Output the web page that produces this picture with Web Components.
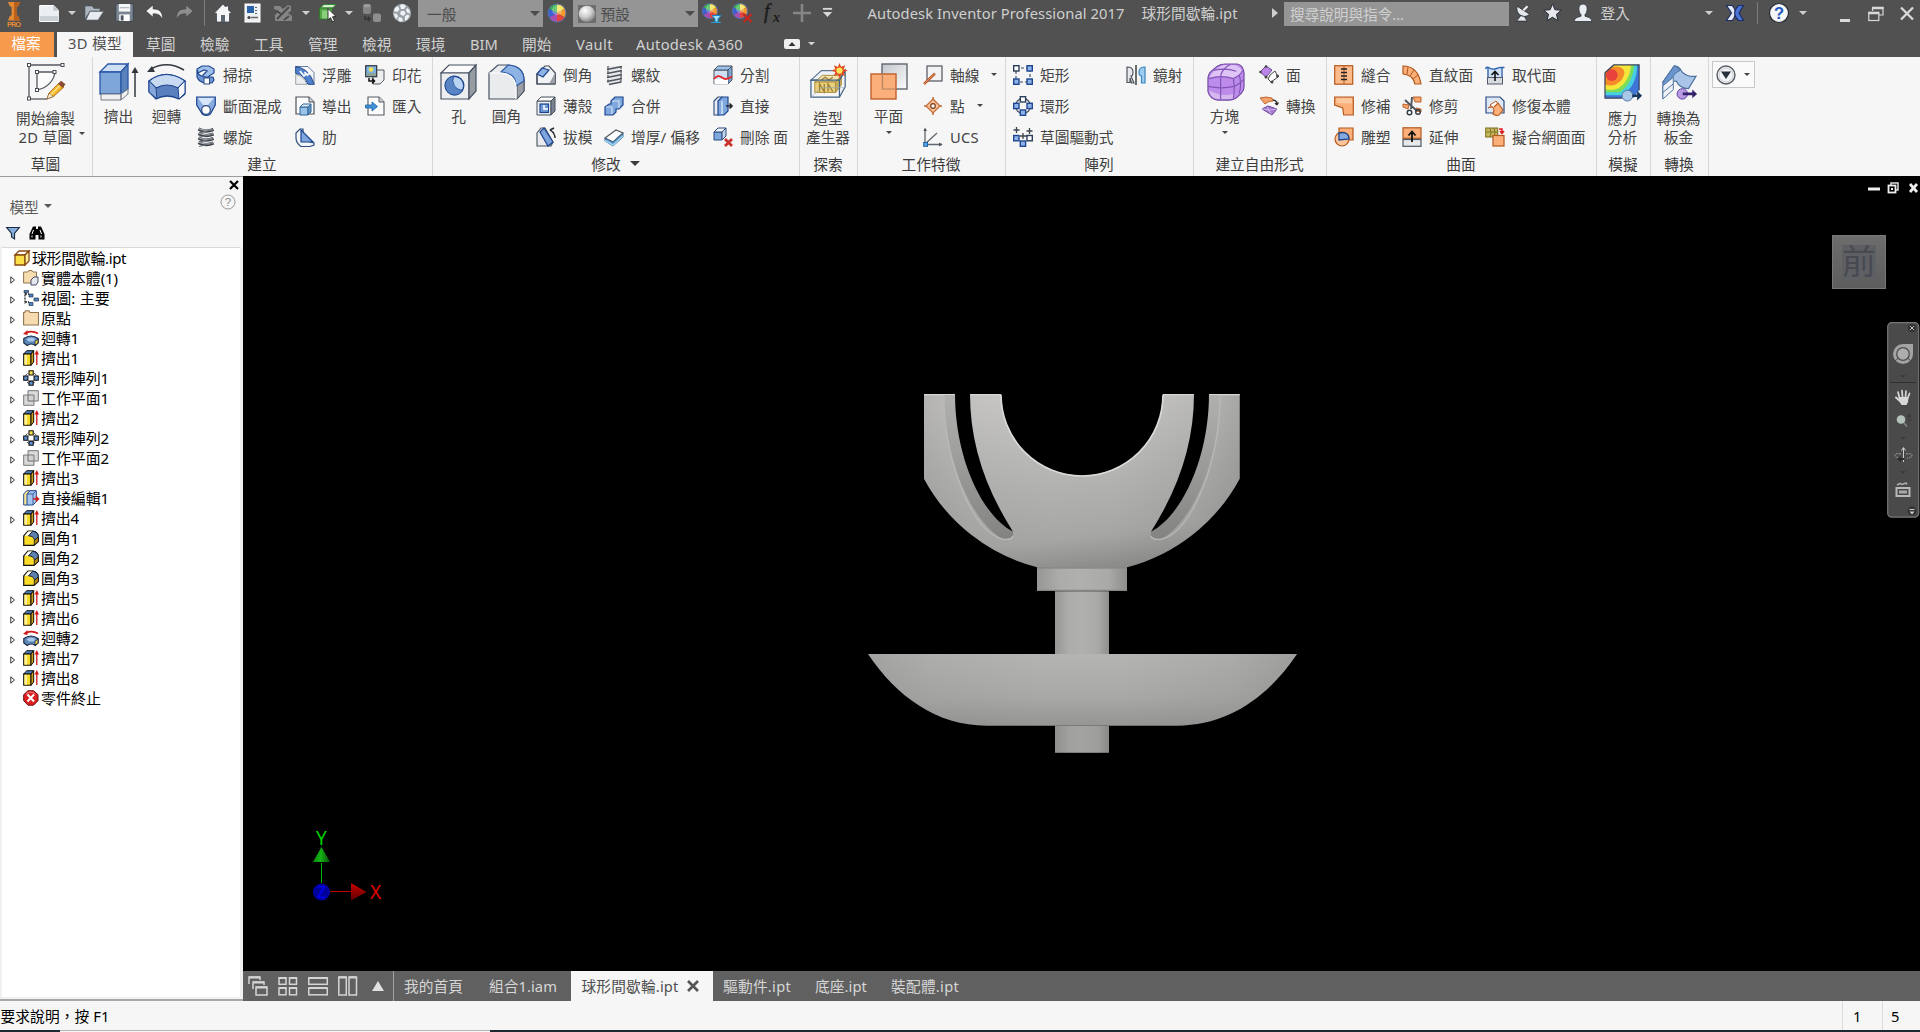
<!DOCTYPE html>
<html lang="zh-Hant">
<head>
<meta charset="utf-8">
<title>Autodesk Inventor Professional 2017</title>
<style>
html,body{margin:0;padding:0}
body{width:1920px;height:1032px;overflow:hidden;background:#f6f6f6;font-family:"Noto Sans","Noto Sans CJK TC",sans-serif;font-size:14.7px;line-height:20px;color:#444}
</style>
</head>
<body>
<inv-app></inv-app>
<script>
const cubeS = (x, y, s, d, f, t, r, st) => `<path d="M${x} ${y + d}h${s}v${s}h${-s}z" fill="${f}" stroke="${st}"/><path d="M${x} ${y + d}l${d} ${-d}h${s}l${-d} ${d}z" fill="${t}" stroke="${st}"/><path d="M${x + s} ${y + d}l${d} ${-d}v${s}l${-d} ${d}z" fill="${r}" stroke="${st}"/>`;
const wheel = (cx, cy, r) => {
  const c = ['#f4e04a', '#f59a2e', '#e2453c', '#a84fb4', '#3c62d0', '#35b34a'];
  let s = '';
  for (let i = 0; i < 6; i++) {
    const a = (i * 60 - 90) * Math.PI / 180, b = (i * 60 - 30) * Math.PI / 180;
    s += `<path d="M${cx} ${cy}L${(cx + r * Math.cos(a)).toFixed(2)} ${(cy + r * Math.sin(a)).toFixed(2)}A${r} ${r} 0 0 1 ${(cx + r * Math.cos(b)).toFixed(2)} ${(cy + r * Math.sin(b)).toFixed(2)}z" fill="${c[i]}"/>`;
  }
  return s + `<circle cx="${cx}" cy="${cy}" r="${r}" fill="none" stroke="#5b6ea8" stroke-width="1"/><circle cx="${cx}" cy="${cy - r * .3}" r="${r * .55}" fill="#fff" opacity=".28"/>`;
};
const node = (x, y, f = '#8fb4ea', s = '#1f4690') => `<rect x="${x}" y="${y}" width="5.300" height="5.300" fill="${f}" stroke="${s}" stroke-width="1.400"/>`;
const ICONS = {
  /* quick access */
  logo: [16, 28, `<path d="M2 2h12l-1.600 4-2 1v8l2 1.500 1.600 4H2l1.600-4 2-1.500V7l-2-1z" fill="#e58a32"/><path d="M8 2h6l-1.600 4-2 1v8l2 1.500 1.600 4H8z" fill="#b9611c"/><text x="8" y="27" text-anchor="middle" textLength="14" font-size="7.500" font-weight="700" font-family="Liberation Sans" fill="#e58a32">PRO</text>`],
  newdoc: [20, 20, `<path d="M.7 2.500h14l4.600 4.600v11.400H.7z" fill="#eceff2" stroke="#fff"/><path d="M1 13h18v5H1z" fill="#c9d0d6"/><path d="M14.500 2.500v5h5z" fill="#b9c0c8"/>`],
  open: [20, 20, `<path d="M1 16V3h7l2 2.500h6V8H6z" fill="#aeb6bf" stroke="#4b5560" stroke-width=".6"/><path d="M2 17L6 8.500h13.500L14 17z" fill="#e8ecf0" stroke="#5a6570" stroke-width=".6"/>`],
  save: [20, 20, `<rect x=".8" y=".8" width="18.400" height="18.400" rx="1" fill="#7b8591" stroke="#39424d"/><rect x="4" y="1" width="12" height="8" fill="#f6f7f8"/><path d="M5 5h10" stroke="#9aa3ad"/><rect x="4.500" y="12" width="11" height="7" fill="#fff"/><rect x="6" y="13" width="3" height="5.500" fill="#4c5561"/>`],
  undo: [20, 20, `<path d="M1 8.500L8.500 2v4.200C15 6.200 19 9 18.500 18 16.500 12 13 11.300 8.500 11.300V15z" fill="#f4f4f4" stroke="#2f2f2f" stroke-width=".6"/>`],
  redo: [20, 20, `<path d="M19 8.500L11.500 2v4.200C5 6.200 1 9 1.500 18 3.500 12 7 11.300 11.500 11.300V15z" fill="#8e8e8e" stroke="#454545" stroke-width=".6"/>`],
  home: [20, 20, `<path d="M10 1L1 10.500h2.500V19h13v-8.500H19L15.500 7V3h-2.800v1z" fill="#f2f4f6" stroke="#3c4550" stroke-width=".8"/><rect x="8" y="12" width="4" height="7" fill="#5b6570"/>`],
  dlg: [20, 20, `<rect x="2" y="1" width="15" height="18" fill="#eef1f4" stroke="#fff"/><rect x="4" y="3" width="7" height="7" fill="#2a63a8"/><path d="M13 4v1M13 7v1M13 10v1" stroke="#333" stroke-width="1.500"/><circle cx="6" cy="14.500" r="1.600" fill="#444"/><path d="M8 14.500h7" stroke="#666" stroke-width="1.500"/>`],
  mat: [20, 20, `<path d="M1 3h6l3 3 5-4 3 1v5l-3 2 4 3v5H2v-6l4-4-5-2z" fill="#858585"/><path d="M4 16L16 4M4 8l5 4M11 17l5-4" stroke="#494949" stroke-width="1.800"/>`],
  sel: [20, 20, `<path d="M2 5l4-3.500h12L14.500 5z" fill="#d8f1cf" stroke="#348a34"/><rect x="1.500" y="5" width="12.500" height="11" fill="#53a646" stroke="#2f7a2b"/><path d="M4 7.500h9v8H4z" fill="#8bcf7c"/><path d="M10 5.500l8 8-3.500.3 2 4-2 1-2-4.200-2.500 2.200z" fill="#fff" stroke="#222" stroke-width=".9"/>`],
  cubes: [20, 20, `<rect x="1" y="1" width="8" height="10" rx="2.500" fill="#848484"/><ellipse cx="5" cy="2.800" rx="3.600" ry="1.700" fill="#9b9b9b"/><rect x="11" y="10.500" width="8" height="8.500" rx="2" fill="#8e8e8e"/><path d="M3 13v3h5m-2-2l2 2-2 2" fill="none" stroke="#333" stroke-width="1.300"/>`],
  ball: [20, 20, `<circle cx="10" cy="10" r="9.200" fill="#9ba3aa"/><g fill="#f0f2f4"><path d="M8 2l3-1 3 2-2 3H9zM3 5l3-2 1.500 3.500L5 9 2 8zM9 8h3.500l1 3-2.500 2-3-2zM15 5l2.500 2 .5 3.500-3-1-1-2.500zM1.500 10.500L5 11l1 3-2 2zM7 14l3 1 1 3-3 .7-2-2zM13 13l3-1.500 1.500 1.500-2.500 4-2 .5z"/></g>`],
  wheel: [20, 20, wheel(10, 10, 9)],
  sphere: [18, 18, `<defs><radialGradient id="g" cx=".38" cy=".3" r=".8"><stop offset="0" stop-color="#fff"/><stop offset=".5" stop-color="#ccc"/><stop offset="1" stop-color="#6a6a6a"/></radialGradient></defs><rect width="18" height="18" fill="#6d6d6d"/><circle cx="9" cy="9" r="8.300" fill="url(#g)"/>`],
  wheelf: [20, 20, wheel(8, 8, 7.500) + `<path d="M10 12.500h9l-3 3.500v3h-3v-3z" fill="#9fdcf6" stroke="#1489c8"/><path d="M9 19.500h10" stroke="#2e9ad8"/>`],
  wheelx: [20, 20, wheel(8, 8, 7.500) + `<path d="M11.500 11l8 8m0-8l-8 8" stroke="#c22820" stroke-width="2.400"/>`],
  fx: [20, 20, `<text x="1" y="15" font-family="Liberation Serif" font-style="italic" font-size="20" fill="#1c1c1c" stroke="#1c1c1c" stroke-width=".4">f</text><text x="10" y="19" font-family="Liberation Serif" font-style="italic" font-weight="700" font-size="14" fill="#1c1c1c">x</text>`],
  plus: [20, 20, `<path d="M10 1v18M1 10h18" stroke="#868686" stroke-width="2.600"/>`],
  more: [12, 12, `<path d="M1 2h10" stroke="#d8d8d8" stroke-width="2"/><path d="M1 5.500h10L6 11z" fill="#d8d8d8"/>`],
  dish: [20, 20, `<path d="M3.500 2.500L17.500 11.500Q12 16 6.500 12 2 8.500 3.500 2.500z" fill="#e6e9ec" stroke="#222b35" stroke-width=".9"/><path d="M10.500 7L15 2.500" stroke="#f2f2f2" stroke-width="2.200"/><path d="M7.500 13L3 19h11.500L11.500 14z" fill="#e6e9ec" stroke="#222b35" stroke-width=".8"/>`],
  star: [20, 20, `<path d="M10 .8l2.500 6.300 6.700.5-5.100 4.300 1.700 6.600L10 15l-5.800 3.500 1.700-6.600L.8 7.600l6.700-.5z" fill="#e8e9ee" stroke="#1f2836" stroke-width="1"/>`],
  user: [20, 20, `<path d="M10 1c3 0 4.400 2.300 4.100 5.400-.2 2.600-1.100 4.300-2.100 5.200v1.600c3 .8 6.500 1.600 7 5.300H1c.5-3.700 4-4.500 7-5.300v-1.600C7 10.700 6.100 9 5.900 6.400 5.600 3.300 7 1 10 1z" fill="#e9edf1" stroke="#28323d" stroke-width=".8"/>`],
  exch: [20, 20, `<path d="M1.500 2.500h5.500q2.500 1.500 3.500 7-1 6.500-3.500 8H1.500L6.500 10z" fill="#e4e8f5" stroke="#1b2d66" stroke-width="1.200"/><path d="M18.500 2.500h-5Q10.500 5 9.500 10q1 5 4 7.500h5L14 10z" fill="#4a74d6" stroke="#1b2d66" stroke-width="1.200"/>`],
  help: [22, 22, `<circle cx="11" cy="11" r="9.500" fill="#f5f6f8" stroke="#242b35" stroke-width="1.200"/><text x="11" y="17" text-anchor="middle" font-size="16.500" font-weight="700" font-family="Liberation Sans" fill="#2458c0">?</text>`],
  min: [12, 20, `<path d="M0 17.500h10" stroke="#d9d9d9" stroke-width="3"/>`],
  rest: [16, 20, `<path d="M4.500 8V4.500h10.500V12H11" fill="none" stroke="#d9d9d9" stroke-width="1.200"/><path d="M4 5h11.500" stroke="#d9d9d9" stroke-width="2.500"/><rect x=".8" y="9.500" width="10" height="8" fill="none" stroke="#d9d9d9" stroke-width="1.200"/><path d="M.3 10h11" stroke="#d9d9d9" stroke-width="2.500"/>`],
  cls: [14, 20, `<path d="M1 4.500l12 12m0-12l-12 12" stroke="#d9d9d9" stroke-width="2.300"/>`],
  ribmin: [16, 10, `<rect width="16" height="10" rx="2" fill="#eee"/><path d="M4.500 7h7L8 3z" fill="#333"/>`],
  /* large ribbon buttons */
  sketch: [38, 38, `<path d="M2 36V2h34" fill="none" stroke="#54595f" stroke-width="1.300"/><path d="M2 36h18" stroke="#54595f" stroke-width="1.300"/><path d="M10 27V9h18C27 18 20 25 10 27z" fill="#fbfbfb" stroke="#54595f" stroke-width="1.300"/><g fill="#fff" stroke="#4a4f55"><rect x=".5" y=".5" width="3" height="3"/><rect x="34" y=".5" width="3" height="3"/><rect x=".5" y="34" width="3" height="3"/><rect x="8.500" y="7.500" width="3" height="3"/><rect x="26" y="7.500" width="3" height="3"/><rect x="8.500" y="25.500" width="3" height="3"/></g><path d="M20 36l2-6 10-10 5 4-10.500 9.500z" fill="#f3b428" stroke="#9a6414" stroke-width=".8"/><path d="M20 36l2-6 4.500 3.500z" fill="#f8e7c9" stroke="#6b4a1a" stroke-width=".6"/><path d="M31 21l3-3.200 4.500 3.400-3 3.500z" fill="#8a4a33"/><path d="M24 31.500l9-9" stroke="#fde48b" stroke-width="1.500"/>`],
  extrude: [40, 38, `<path d="M1 9l8-8h20l-7 8z" fill="#cfe0f4" stroke="#2a57a8" stroke-width="1.300"/><path d="M1 9h21v22H1z" fill="#7fa6d8" stroke="#2a57a8" stroke-width="1.300"/><path d="M22 9l7-8v25l-7 5z" fill="#5a83bb" stroke="#2a57a8" stroke-width="1.300"/><path d="M2 31h20v6H2zM22 31l7-5v5l-7 6z" fill="#eef0f2" stroke="#777c83"/><path d="M36 34V8" stroke="#33383e" stroke-width="1.500"/><path d="M36 4l3.500 6h-7z" fill="#33383e"/>`],
  revolve: [40, 38, `<path d="M2 18q17-13 36 0v13l-6 5q-12-6-23 0l-7-7z" fill="#5a80be" stroke="#1f4690" stroke-width="1.300"/><path d="M2 18q17-13 36 0l-7 7q-11-6-22 0z" fill="#c7daf2" stroke="#1f4690" stroke-width="1.200"/><path d="M31 25l7-7v12l-6 6z" fill="#f6f8fb" stroke="#1f4690"/><path d="M9 25l1 11-8-7V18z" fill="#86a7da" stroke="#1f4690"/><path d="M37 7Q20-3 4 6" fill="none" stroke="#33383e" stroke-width="1.600"/><path d="M0 9L5 3l3 6z" fill="#33383e"/>`],
  hole: [38, 38, `<path d="M1 10l8-8h27l-7 8z" fill="#fbfbfb" stroke="#465263" stroke-width="1.200"/><path d="M1 10h28v26H1z" fill="#eceef0" stroke="#465263" stroke-width="1.200"/><path d="M29 10l7-8v26l-7 8z" fill="#979ba2" stroke="#465263" stroke-width="1.200"/><circle cx="14.500" cy="22.500" r="9.300" fill="#b9d3f2" stroke="#1f4690" stroke-width="1.400"/><path d="M14 13a9.500 9.500 0 0 0 9 14A9.500 9.500 0 1 1 14 13z" fill="#5884c4" stroke="#1f4690" stroke-width=".8"/>`],
  fillet: [38, 38, `<path d="M1 10l9-8h10q16 1 16 15v11l-7 8H1z" fill="#e9ebed" stroke="#465263" stroke-width="1.200"/><path d="M29 23l7-7v12l-7 8z" fill="#9a9ea4" stroke="#465263"/><path d="M13 9l7-7q16 1 16 16l-8 5Q28 10 13 9z" fill="#8db3e5" stroke="#2a57a8" stroke-width="1.200"/><path d="M1 10h12q14 1 15 14v12" fill="none" stroke="#fff" stroke-width="1.200"/>`],
  shapegen: [40, 38, `<path d="M1 18L12 8h25L31 18z" fill="#eef3f9" stroke="#5f7690" stroke-width="1.200"/><path d="M5 20l8-7h20l-6 7z" fill="#f2e2ac" stroke="#a88a3c"/><path d="M5 20h22v11H5z" fill="#e7cf7c" stroke="#a88a3c"/><path d="M27 20l6-7v10l-6 8z" fill="#cbb05a" stroke="#a88a3c"/><path d="M10 30v-8l5 8v-8m4 8v-8l5 8M12 18l4-3 4 3 4-3" fill="none" stroke="#9c7b2c" stroke-width="1.300"/><path d="M1 18h30v18H1zM31 18l6-10v17l-6 11" fill="none" stroke="#3f6186" stroke-width="1.300"/><path d="M1 36l11-10h25" fill="none" stroke="#93a9c2" stroke-width=".7"/><path d="M31 0l1.700 4 4.300-1.500L35.400 6.500 40 8l-4.600 1.600 1.600 4-4.300-1.500L31 16l-1.600-4-4.200 1.600 1.500-4L22 8l4.700-1.500-1.500-4 4.200 1.600z" fill="#e34b1f"/><circle cx="31" cy="8" r="3.300" fill="#ffe45c"/>`],
  plane: [38, 38, `<defs><linearGradient id="g" x2="1" y2="1"><stop offset="0" stop-color="#c2c6cb"/><stop offset="1" stop-color="#fbfbfb"/></linearGradient></defs><rect x="12" y="1" width="25" height="25" fill="url(#g)" stroke="#5e6770" stroke-width="1.400"/><rect x="1" y="11" width="25" height="25" fill="#fbaa72" stroke="#c0602a" stroke-width="1.400" fill-opacity=".93"/><path d="M12.500 11v15H26" fill="none" stroke="#b98660" stroke-width="1.200"/>`],
  freeform: [40, 40, `<path d="M2 17Q2 11 6 8l6-5q3-2 8-2h12q6 1 7 9v14q0 5-5 9-4 5-10 5H12q-8-1-10-9z" fill="#bd8bea" stroke="#744aa5" stroke-width="1.200"/><path d="M3 16Q16 11 28 16q7-3 9-8-3-6-10-6h-9Q7 6 3 16z" fill="#dec3f6"/><path d="M3 28q14 8 27 3l-3 6H11q-6-1-8-9z" fill="#d9c2f0" opacity=".8"/><path d="M2 24q14 3 27 0 6-3 9.500-7M15 13v24M3 16q13-4 25 0 7-3 9.500-8M8 7.500q12-3 23 1M15 13q2-8 10-11.500M28 16q2 11 0 20M34 12q3 10 0 19" fill="none" stroke="#8454b8" stroke-width="1.200"/>`],
  stress: [40, 40, `<path d="M1 10l9-8h26v26l-6 8H1z" fill="#3e76d8"/><path d="M1 10l9-8h24q0 22-16 31H1z" fill="#45cfe0"/><path d="M1 10l9-8h21q-2 20-15 28H1z" fill="#7bdc5a"/><path d="M1 10l9-8h18q-2 17-13 24-6 3-14 1z" fill="#f5e63a"/><path d="M1 10l7-6q12-2 13 6-1 8-9 12-6 2-11 0z" fill="#f58b2a"/><circle cx="8" cy="12.500" r="6" fill="#e8403a"/><path d="M1 10l9-8h26v26M1 10v26h18" fill="none" stroke="#3a3f58" stroke-width="1.200"/><circle cx="24" cy="33.500" r="5.500" fill="#a9c8e8" stroke="#54799e"/><path d="M29 32.200h5v-3.700l5 5-5 5v-3.700h-5z" fill="#17375c"/>`],
  sheet: [40, 40, `<path d="M3 20L15 3q5 0 8 6 5 6 15 5L30 27q-9 0-13-8z" fill="#a9c4e6" stroke="#4a6f9c" stroke-width="1.200"/><path d="M3 20L15 3q4 0 6 5-6 2-10 11L7 25l-4 12z" fill="#6a94cc" stroke="#4a6f9c"/><path d="M3 24l11-9v13L3 38z" fill="#eef2f6" stroke="#4a6f9c"/><path d="M3 31l11-9" stroke="#4a6f9c"/><circle cx="23.500" cy="32.500" r="5.500" fill="#b79be2" stroke="#5d3ba0"/><path d="M24 31h10v-3l5 4.500-5 4.500v-3H24z" fill="#33216b"/>`],
  /* small ribbon buttons */
  sweep: [20, 20, `<path d="M2 8L1 4l5-3h7l5 3v4l-5 3v3H7v-4l4-4-3-1z" fill="#9dbfe9" stroke="#1f4690" stroke-width="1.200"/><path d="M1 7q3 5 10 5h6l1 3-2 3H9Q3 17 1 12z" fill="#6f98d4" stroke="#1f4690" stroke-width="1.200"/><rect x="8" y="13" width="5.500" height="6" fill="#fff" stroke="#2b4a80"/>`],
  loft: [20, 20, `<path d="M.7 1h18.600v8l-5 9q-4 3-8 0L.7 9z" fill="#87abdd" stroke="#1f4690" stroke-width="1.200"/><path d="M2 2h16L12 9H7z" fill="#d6e5f7"/><circle cx="10" cy="14" r="4.300" fill="#fff" stroke="#2b4a80" stroke-width="1.200"/>`],
  coil: [20, 20, [1, 5.5, 10, 14.5].map(y => `<path d="M2.500 ${y + 1}q7 4 15 .5" fill="none" stroke="#3e4349" stroke-width="3.200"/><path d="M3 ${y + .8}q7 3 14 .5" fill="none" stroke="#b7bcc2" stroke-width="1.100"/><path d="M17 ${y + 1.5}l-14 3.500" stroke="#6a7077" stroke-width="1"/>`).join('')],
  emboss: [20, 20, `<path d="M.7 1.500Q14 2 19.300 19.300H13Q9 9 .7 8.500z" fill="#4f82cc" stroke="#1f4690"/><path d="M.7 9.500v9.800H12Q8.500 11 .7 9.500z" fill="#eceef0" stroke="#8a9097" stroke-width=".8"/><path d="M.7 1.500H13l6 6v11Q14 3 .7 1.500z" fill="#f3f5f7" stroke="#2b4a80" stroke-width=".7"/><path d="M5 6l4 5 2-2-1.500-2 3 3 2.500-2-4-5" fill="none" stroke="#fff" stroke-width="1.700"/>`],
  derive: [20, 20, `<path d="M1 1h13l5 5v12H1z" fill="#fbfbfb" stroke="#4b535c" stroke-width="1.200"/><path d="M14 1v5h5" fill="#d0d4d8" stroke="#4b535c"/>` + cubeS(5, 8, 8, 3, '#9cc4ea', '#dcecfa', '#6495c9', '#2d6596')],
  rib: [20, 20, `<path d="M1 6l4-4h3v9q2 3 7 4l4 1v2l-4 1.500H6Q1 16 1 11z" fill="#f2f4f7" stroke="#33507e" stroke-width="1.200"/><path d="M6 3v12h12z" fill="#7fa7dd" stroke="#1f4690" stroke-width="1.200"/>`],
  decal: [20, 20, `<path d="M8 8l4-3h7v10l-4 4H8z" fill="#eceef0" stroke="#555b62"/><rect x=".7" y=".7" width="11" height="11" fill="#7bb2e2" stroke="#30363d" stroke-width="1.200"/><circle cx="6" cy="4.500" r="2.300" fill="#f7e24a"/><path d="M1.500 8h9.500v3H1.500z" fill="#8da39a"/><path d="M4 13v3h5m-2-2.500L9.500 16 7 18.500" fill="none" stroke="#111" stroke-width="1.500"/>`],
  import: [20, 20, `<path d="M3 1h11l5 5v13H3z" fill="#fbfbfb" stroke="#555c64" stroke-width="1.100"/><path d="M14 1v5h5" fill="#d0d4d8" stroke="#555c64"/><path d="M.5 9H7V6l5.500 4.500L7 15v-3H.5z" fill="#3f93dc" stroke="#1a5fa0" stroke-width=".8"/>`],
  chamfer: [20, 20, `<path d="M1 9l8-8h4l6.300 7v11H6L1 19z" fill="#f1f2f4" stroke="#46505c" stroke-width="1.200"/><path d="M1 9l5-6 7 2-6 7z" fill="#8db3e5" stroke="#1f4690" stroke-width="1.200"/><path d="M13 19h6V8z" fill="#9a9ea4"/><path d="M1 9v10h18" fill="none" stroke="#46505c" stroke-width="1.200"/>`],
  shell: [20, 20, cubeS(1, 1, 14, 4, '#f1f2f4', '#fff', '#7a8490', '#46505c') + `<rect x="4" y="8" width="8.500" height="8.500" fill="#6f9bd8" stroke="#1f4690" stroke-width="1.200"/><path d="M8 9v4h4" fill="none" stroke="#fff" stroke-width="1.500"/>`],
  draft: [20, 20, `<path d="M1 6l4-5h4l8 14-2 4H1z" fill="#e9ebee" stroke="#46505c" stroke-width="1.100"/><path d="M4 5l4-4 9 14-5 4z" fill="#7fa6dc" stroke="#1f4690" stroke-width="1.200"/><path d="M14 3l4-2m-4 2l4 3m-4-3q5 3 5 8" fill="none" stroke="#24282e" stroke-width="1.400"/>`],
  thread: [20, 20, `<path d="M4 1h13v18H4z" fill="#e7e9ec"/><path d="M4 1v18M17 1v18" stroke="#555" stroke-width="1.200" stroke-dasharray="3 1.500"/><path d="M3 4.500l15-3M3 8.500l15-3M3 12.500l15-3M3 16.500l15-3M5 19.500l12-2.500" stroke="#4e545b" stroke-width="1.500"/>`],
  combine: [20, 20, `<path d="M7 5l4-4h8v8l-4 4h-3v3l-3 3H1v-8l4-3h2z" fill="#7fa9de" stroke="#1f4690" stroke-width="1.200"/><path d="M8 5h7v7M2 11h6v7" fill="none" stroke="#cfe0f5" stroke-width="1.200"/>`],
  thicken: [20, 20, `<path d="M1 11L12 3l7 3-10 9z" fill="#fff" stroke="#50565e" stroke-width="1.100"/><path d="M1 11v3l8 5 10-9V6L9 15z" fill="#5c97cf" stroke="#4a6380"/><path d="M1 13.500l8 4.500 10-9" fill="none" stroke="#9bd7f5" stroke-width="1.500"/>`],
  split: [20, 20, cubeS(1, 1, 14, 4, '#cfe0f5', '#9dc2ee', '#7fa6d8', '#46505c') + `<path d="M1.500 14h13.500v5.500H1.500z" fill="#fff"/><path d="M1 14q4-5 8-1.500t10-1" fill="none" stroke="#e02828" stroke-width="1.800"/>`],
  direct: [20, 20, `<path d="M1 5l4-4h4v14l-3 4H1z" fill="#e9ebee" stroke="#2b4a80" stroke-width="1.100"/><path d="M5 5l4-4h6v14l-4 4H5z" fill="#7fa9de" stroke="#1f4690" stroke-width="1.200"/><path d="M9 5v13" stroke="#fff"/><path d="M13 10h6m-2.500-2.500L19 10l-2.500 2.500" fill="none" stroke="#24282e" stroke-width="1.700"/>`],
  delface: [20, 20, cubeS(1, 1, 8, 4, '#7fa9de', '#eef2f8', '#c4d4e8', '#2b4a80') + `<path d="M12 12l7 7m0-7l-7 7" stroke="#c8322b" stroke-width="2.800"/>`],
  axis: [20, 20, `<rect x="4" y="1" width="15" height="15" fill="#f1f2f4" stroke="#50565e" stroke-width="1.200"/><path d="M1 19L12 8.500" stroke="#b8562a" stroke-width="2.500"/><path d="M1 19L12 8.500" stroke="#f3a477" stroke-width=".8"/>`],
  point: [20, 20, `<path d="M10 1v18M1 10h18" stroke="#c06a38" stroke-width="1.500"/><path d="M10 3l7 7-7 7-7-7z" fill="#fbc095" stroke="#c06a38" stroke-width="1.200"/><circle cx="10" cy="10" r="2.300" fill="#fff" stroke="#7a3c1a" stroke-width="1.200"/>`],
  ucs: [20, 20, `<path d="M2 17V2M2 17.500h17M2 17L14 6" fill="none" stroke="#60666e" stroke-width="1.300"/><path d="M.5 4L2 .5 4 4zM16 15.500l3.500 2-3.500 2z" fill="#50565e"/><rect x=".7" y="15.500" width="3.800" height="3.800" fill="#59a7ea" stroke="#1e5fa5"/>`],
  rect: [20, 20, `<path d="M3 3h14v14H3z" fill="none" stroke="#30465f" stroke-width="1.100" stroke-dasharray="3 2"/>` + node(.7, .7, '#fff', '#2b3f5a') + node(14, .7) + node(.7, 14) + node(14, 14)],
  circ: [20, 20, `<circle cx="10" cy="10" r="7.500" fill="none" stroke="#4b5560" stroke-width="1.300"/>` + node(7.3, .7, '#fff', '#2b3f5a') + node(.7, 7.3) + node(14, 7.3) + node(7.3, 14)],
  skdrv: [20, 20, `<path d="M3.500 0v6M.5 3h6M16.500 1v6M13.500 4h6M10 6v6M7 9h7" stroke="#3d444c" stroke-width="1.300"/>` + node(.7, 8.5) + node(14, 8.5, '#fff', '#2b3f5a') + node(7.3, 14)],
  mirror: [20, 20, `<path d="M10 0v20" stroke="#222" stroke-width="1.300"/><path d="M1 2q6 0 6 5 0 4-2 4l3 7H5.500L4 13v4.500H1z" fill="#e7e9ec" stroke="#50565e" stroke-width="1.200"/><path d="M19 2q-6 0-6 5 0 4 2.500 4v7H19z" fill="#9fcdf0" stroke="#3a86bd" stroke-width="1.200"/>`],
  ffface: [20, 20, `<path d="M1 7l6-6 6 4-6 7z" fill="#ba86e6" stroke="#6d459c"/><path d="M11 10l5-4 3 6-7 5-3-3z" fill="#fff" stroke="#444" /><g fill="#444"><circle cx="1.500" cy="7" r="1.300"/><circle cx="7" cy="1.500" r="1.300"/><circle cx="7" cy="12" r="1.500"/><circle cx="13" cy="17" r="1.500"/><circle cx="18.500" cy="11" r="1.500"/></g>`],
  ffconv: [20, 20, `<path d="M1 2q6-2 12 0l1 3q-5 0-8 3z" fill="#f3a06a" stroke="#bf6a35"/><path d="M3 13l6-3 9 3-5 6z" fill="#a57bd2" stroke="#6d459c"/><path d="M3 13q8 2 15 0M8 11l4 7" fill="none" stroke="#d9c2f0" stroke-width=".8"/><path d="M14 4q5 1 4 5m0 0l-2-2m2 2l1.500-2.500" fill="none" stroke="#333" stroke-width="1.300"/>`],
  stitch: [20, 20, `<rect x=".7" y=".7" width="18" height="18.500" fill="#fdba8a" stroke="#b3591e" stroke-width="1.200"/><path d="M10 1v18" stroke="#b3591e"/><path d="M7 4h6M7 7.500h6M7 11h6M7 14.500h6" stroke="#222" stroke-width="1.500"/>`],
  patch: [20, 20, `<path d="M.7 1h18.600v18h-9.600l-1-7-8-3z" fill="#fbb07a" stroke="#b3591e" stroke-width="1.200"/><path d="M2 2.500h16v5L3 7z" fill="#fdc79f"/>`],
  sculpt: [20, 20, `<path d="M5 1h14v12H5z" fill="#fbaf7a" stroke="#b3591e" stroke-width="1.200"/><circle cx="8" cy="12" r="7" fill="#fbc49c" stroke="#b3591e" stroke-width="1.200"/><path d="M5 13V6q10-2 10 6z" fill="#84abe0" stroke="#1f4690" stroke-width="1.300"/>`],
  ruled: [20, 20, `<path d="M1 1q15 0 18 18h-6Q11 10 1 9z" fill="#fbaf7a" stroke="#b3591e" stroke-width="1.200"/><path d="M6 2L5 9.500M12 5l-4 6M16 10l-5 4" stroke="#b3591e" stroke-width="1"/>`],
  trim: [20, 20, `<path d="M11 1h8v5h-6zM1 8l6 1-1 4-5-2zM14 12l5 1v3l-5-1z" fill="#f7a670" stroke="#b3591e" stroke-width=".9"/><path d="M10 1L9 13M3 4l12 11" stroke="#4e555d" stroke-width="1.900"/><circle cx="7.500" cy="16.500" r="2.300" fill="none" stroke="#333a42" stroke-width="1.400"/><circle cx="16" cy="16" r="2.300" fill="none" stroke="#333a42" stroke-width="1.400"/>`],
  extend: [20, 20, `<rect x="1" y=".8" width="18" height="10.500" fill="#fbaf7a" stroke="#b3591e" stroke-width="1.200"/><rect x="1" y="12.500" width="18" height="6.800" fill="#e7e9ec" stroke="#50596a" stroke-width="1.200"/><path d="M10 15V5m-3.500 3.500L10 4.500l3.500 4" fill="none" stroke="#111" stroke-width="1.800"/>`],
  replace: [20, 20, `<path d="M4 3q5 2 12 0v9H4z" fill="#cfe0f5"/><path d="M.5 4q1-3 4-1t7 .5 8-1M3 3v9M17 3v9" fill="none" stroke="#2f62b0" stroke-width="1.400"/><rect x="2.500" y="12.500" width="15" height="6.500" fill="#d7dbe0" stroke="#50596a"/><path d="M10 16V7m-3.500 3L10 6.500 13.500 10" fill="none" stroke="#111" stroke-width="1.600"/>`],
  repair: [20, 20, `<path d="M1 1h14l4 4v12H1z" fill="#dfe9f6" stroke="#2b4a80" stroke-width="1.200"/><path d="M5 9l6-4 5 8-4 2z" fill="#fff" stroke="#b3591e"/><path d="M3 12q5-3 6 2l-1 4q5 3 7 0l3-4-5-7-4 4" fill="#fbaf7a" stroke="#b3591e" stroke-width="1.100"/>`],
  fitmesh: [20, 20, `<rect x=".7" y="1" width="12" height="9" fill="#c6b85a" stroke="#7a6d25"/><path d="M1 5h12M5 1q2 5 0 9M9 1q2 5 0 9" fill="none" stroke="#7a6d25" stroke-width=".9"/><rect x="8" y="8.500" width="11" height="10.500" fill="#fbaf7a" stroke="#b3591e" stroke-width="1.200"/><path d="M14 2h3v4m-2-2l2 2.500L19 4" fill="none" stroke="#e02020" stroke-width="1.500"/>`],
  dd: [20, 20, `<circle cx="10" cy="10" r="9" fill="#f3f4f5" stroke="#565c63" stroke-width="1.400"/><circle cx="10" cy="10" r="7" fill="none" stroke="#c9ccd0"/><path d="M5 6.500h10L10 14z" fill="#26323d"/>`],
  /* browser tree */
  part: [16, 16, `<path d="M1 5l4-4h10l-4 4z" fill="#fff" stroke="#8a4a10" stroke-width="1.300"/><path d="M1 5h10v10H1z" fill="#fbe04a" stroke="#8a4a10" stroke-width="1.300"/><path d="M11 5l4-4v10l-4 4z" fill="#fdf0a0" stroke="#8a4a10" stroke-width="1.300"/>`],
  bodies: [16, 16, `<path d="M.6 13V2h4l1-1.400H9l1 1.400h3.500v11z" fill="#f6dcae" stroke="#8f7550"/><path d="M8 10l3-3h4v5l-2 3H8z" fill="#e6e8f0" stroke="#444a66"/>`],
  views: [16, 16, `<path d="M2 1.500v12.500M2 4h4M2 12h4" fill="none" stroke="#222" stroke-width="1.300" stroke-dasharray="2 1"/><path d="M6 4h4v3H6zM11 8h4.500v3H11zM6 12.500h4v3H6zM1 .5h4.500v2H1z" fill="#4f83c6" stroke="#234" stroke-width=".7"/>`],
  folder: [16, 16, `<path d="M.6 15V2.500h1L2.500.8H6l1 1.700h8.500V15z" fill="#f6dcae" stroke="#8f7550" stroke-width="1.100"/>`],
  trev: [16, 16, `<path d="M.8 8.500q7.200-5 14.400 0v4.500l-3 2.500q-4-3-8 0L.8 13z" fill="#5b86b8" stroke="#14253a" stroke-width="1.100"/><path d="M3.500 9q4.500-3 9 0l-2 2.500h-5z" fill="#a8c6e6"/><path d="M12 11.500l3-2.500v4l-3 2z" fill="#fbe04a" stroke="#14253a" stroke-width=".8"/><path d="M15 3.500Q9 0 3 3" fill="none" stroke="#d01818" stroke-width="1.600"/><path d="M0 4l4.500-4v5z" fill="#d01818"/>`],
  text: [16, 16, `<path d="M.7 4l3-3.300h7L8 4z" fill="#4e7fb8" stroke="#111" stroke-width="1"/><path d="M.7 4H8v11.300H.7z" fill="#fbdb2a" stroke="#111" stroke-width="1.100"/><path d="M1.500 5H4v9.500H1.500z" fill="#fff09a"/><path d="M8 4l2.700-3.300v11.500L8 15.300z" fill="#c89b10" stroke="#111" stroke-width="1"/><path d="M13.800 15V3" stroke="#d01818" stroke-width="1.300"/><path d="M13.800 0L16 4.500h-4.500z" fill="#d01818"/>`],
  tcirc: [16, 16, `<circle cx="8" cy="8" r="5.800" fill="none" stroke="#333" stroke-dasharray="3 2"/><g stroke="#111" stroke-width="1.100"><path d="M6 .8h4.200V5H6z" fill="#fbe04a"/><path d="M.7 6h4.200v4.200H.7zM11.100 6h4.200v4.200h-4.200zM6 11.100h4.200v4.200H6z" fill="#5b8fd0"/></g>`],
  tplane: [16, 16, `<path d="M5 .7h10.300V11H5z" fill="#dadada" stroke="#777"/><path d="M.7 5H11v10.300H.7z" fill="#cfcfcf" fill-opacity=".8" stroke="#777"/><path d="M5 5v6h6" fill="none" stroke="#777"/>`],
  tdirect: [16, 16, `<path d="M.7 4l3-3.300h3v11L4 15H.7z" fill="#fbe890" stroke="#1f4690"/><path d="M4 4l3-3.300h6.300v11L10 15H4z" fill="#a7c6ee" stroke="#1f4690"/><path d="M10 4v11M4 4h6l3-3" fill="none" stroke="#1f4690" stroke-width=".8"/><path d="M10 9h5m-2-2.500L15.500 9 13 11.500" fill="none" stroke="#d01818" stroke-width="1.400"/>`],
  tfillet: [16, 16, `<path d="M.7 6L5 1h5q5.300 1 5.300 6v4.500L11 15.300H.7z" fill="#fbdb2a" stroke="#111" stroke-width="1.200"/><path d="M1.500 5.800L5.300 1.500H9L6 5.500z" fill="#fff"/><path d="M5.500 5.800l4-4.500q5.500.5 5.800 5.500L11.500 10.500q-.5-4.500-6-4.700z" fill="#5f7fae" stroke="#14253a"/><path d="M11.300 10.500l4-3.500v4.500l-4 3.500z" fill="#b88c10" stroke="#111" stroke-width=".8"/>`],
  tend: [16, 16, `<path d="M5 .7h5.500l4.500 4v6l-4.500 4.500H5l-4.300-4.500v-6z" fill="#dc2020" stroke="#6d1010"/><path d="M4.500 4.500l6.500 7m0-7l-6.500 7" stroke="#fff" stroke-width="2"/><path d="M3 4q5-4 9 0" stroke="#f58a8a" fill="none"/>`],
  filter: [14, 14, `<path d="M.7 1.500h12.600L8.500 7.500v5.500l-3-2V7.500z" fill="#86aede" stroke="#1c2c42" stroke-width="1.200"/>`],
  bino: [16, 14, `<path d="M4 .5h3V3h2V.5h3L15.500 8v5.500H9.500V9h-3v4.500H.5V8z" fill="#000"/><path d="M4.500 4L3 8M11 4l1.500 4M3 9.500v2M12 9.500v2" stroke="#fff" stroke-width="1"/>`],
  qm: [16, 16, `<circle cx="8" cy="8" r="7" fill="#f6f6f6" stroke="#999"/><text x="8" y="12" text-anchor="middle" font-size="11.500" font-family="Liberation Sans" fill="#888">?</text>`],
  px: [10, 10, `<path d="M1 1l8 8m0-8L1 9" stroke="#000" stroke-width="2.200"/>`],
  exp: [6, 8, `<path d="M.8.8v6.400L4.600 4z" fill="#fff" stroke="#333" stroke-width="1"/>`],
  /* document tab strip */
  casc: [20, 20, `<g fill="#606060" stroke="#d5d5d5" stroke-width="1.500"><path d="M1 8V1h11v3"/><path d="M5 13V6h11v3"/><rect x="8" y="11" width="11" height="8"/></g><path d="M1 1.500h11M5 6.500h11M8 11.500h11" stroke="#d5d5d5" stroke-width="2.200"/>`],
  grid4: [20, 20, `<g fill="none" stroke="#d5d5d5" stroke-width="1.500"><rect x="1" y="1.800" width="7" height="6.500"/><rect x="11.500" y="1.800" width="7" height="6.500"/><rect x="1" y="12" width="7" height="6.800"/><rect x="11.500" y="12" width="7" height="6.800"/></g><path d="M1 2h7.500M11 2h8M1 12h7.500M11 12h8" stroke="#d5d5d5" stroke-width="2.200"/>`],
  hsplit: [20, 20, `<g fill="none" stroke="#d5d5d5" stroke-width="1.500"><rect x=".8" y="1.800" width="18.500" height="6.500"/><rect x=".8" y="12" width="18.500" height="6.800"/></g><path d="M1 2h18M1 12h18" stroke="#d5d5d5" stroke-width="2.200"/>`],
  vsplit: [20, 20, `<g fill="none" stroke="#d5d5d5" stroke-width="1.500"><rect x=".8" y="1" width="7.500" height="18"/><rect x="11" y="1" width="7.500" height="18"/></g><path d="M1 1.500h7M11 1.500h7" stroke="#d5d5d5" stroke-width="2.200"/>`],
  up: [14, 12, `<path d="M1 11h12L7 1z" fill="#e0e0e0"/>`],
  tx: [12, 12, `<path d="M1 1l10 10m0-10L1 11" stroke="#555" stroke-width="2.700"/>`],
  wbtn: [52, 12, `<path d="M0 5.500h12v3H0z" fill="#eee"/><rect x="23" y="1" width="7" height="7" fill="none" stroke="#ddd" stroke-width="1.500"/><rect x="20.500" y="3.500" width="7" height="7" fill="#000" stroke="#eee" stroke-width="1.800"/><rect x="23" y="6" width="2" height="2" fill="#eee"/><path d="M42 2l7 8m0-8l-7 8" stroke="#eee" stroke-width="2.700"/>`]
};
const define = (name, css, render) => customElements.define(name, class extends HTMLElement {
  connectedCallback() {
    if (this.shadowRoot) return;
    const t = document.createElement('template');
    t.innerHTML = `<style>:host{display:block;box-sizing:border-box}*{box-sizing:border-box}${css}</style>${render(this)}`;
    this.attachShadow({ mode: 'open' }).append(t.content.cloneNode(true));
  }
});
define('inv-icon', ':host{line-height:0;flex:none}svg{display:block;overflow:visible}', e => {
  const [w, h, s] = ICONS[e.getAttribute('name')];
  const W = +(e.getAttribute('w') || w), H = W * h / w;
  return `<svg width="${W}" height="${H}" viewBox="0 0 ${w} ${h}">${s}</svg>`;
});
define('inv-caret', ':host{line-height:0;flex:none}svg{display:block}', e => {
  const w = +(e.getAttribute('w') || 8), d = e.getAttribute('dir') === 'right';
  return d ? `<svg width="6" height="10"><path d="M0 0v10l6-5z" fill="currentColor"/></svg>`
    : `<svg width="${w}" height="${w / 2}" viewBox="0 0 8 4"><path d="M0 0h8L4 4z" fill="currentColor"/></svg>`;
});
/* Label whose letters are spread or tightened to a given width */
customElements.define('fit-text', class extends HTMLElement {
  connectedCallback() {
    if (this.shadowRoot) return;
    this.attachShadow({ mode: 'open' }).innerHTML = '<style>:host{display:block;white-space:nowrap;flex:none}span{display:inline-block}</style><span><slot></slot></span>';
    const w = +this.getAttribute('w'), s = this.shadowRoot.querySelector('span');
    if (!w) return;
    this.style.width = w + 'px';
    const n = [...this.textContent].length, nat = s.getBoundingClientRect().width;
    if (nat && n > 1) s.style.letterSpacing = ((w - nat) / n).toFixed(3) + 'px';
  }
});
const cjk = t => [...t].length * 14.7;
const T = (t, w, a = '') => `<fit-text w="${w || cjk(t)}" ${a}>${t}</fit-text>`;
const Ic = (n, w) => `<inv-icon name="${n}"${w ? ` w="${w}"` : ''}></inv-icon>`;
/* Lays [left, width, html] cells out in one flex row, spacing each from the previous one */
const cells = (list, start = 0) => {
  let c = start, s = '';
  for (const [x, w, h, st = ''] of list) { s += `<div style="flex:none;margin-left:${(x - c).toFixed(2)}px;width:${w}px;${st}">${h}</div>`; c = x + w; }
  return s;
};
define('inv-titlebar', `:host{height:28px;background:#515151;color:#cfcfcf;display:flex;align-items:center;padding-bottom:3px}
.combo{background:#959595;color:#4c4c4c;height:27px;display:flex;align-items:center;margin-bottom:-2px;box-sizing:border-box}
.sep{height:26px;background:#7d7d7d}`, () => cells([
  [6, 16, Ic('logo', 16), 'margin-bottom:-3px'], [39, 20, Ic('newdoc')], [68, 8, '<inv-caret></inv-caret>'], [84, 20, Ic('open')], [115, 19, Ic('save', 19)], [145, 19, Ic('undo', 19)], [175, 19, Ic('redo', 19)],
  [204, 1, '<div class="sep"></div>'], [213, 20, Ic('home')], [243, 20, Ic('dlg')], [273, 20, Ic('mat')], [302, 8, '<inv-caret></inv-caret>'], [318, 20, Ic('sel')], [345, 8, '<inv-caret></inv-caret>'], [362, 20, Ic('cubes')], [392, 20, Ic('ball')],
  [418, 125, `<div class="combo">${cells([[427, 30, T('一般')], [530, 10, '<inv-caret w="10"></inv-caret>']], 418)}</div>`],
  [547, 20, Ic('wheel')],
  [573, 125, `<div class="combo">${cells([[578, 18, Ic('sphere')], [600.5, 30, T('預設')], [685, 10, '<inv-caret w="10"></inv-caret>']], 573)}</div>`],
  [702, 20, Ic('wheelf')], [732, 20, Ic('wheelx')], [763, 20, Ic('fx')], [792, 20, Ic('plus')], [822, 11, Ic('more', 11)],
  [867.5, 257, T('Autodesk Inventor Professional 2017', 257)], [1141.5, 96, T('球形間歇輪.ipt', 96)], [1272, 6, '<inv-caret dir="right"></inv-caret>'],
  [1284, 225, `<div class="combo" style="height:24px;color:#d0d0d0">${cells([[1290, 115, T('搜尋說明與指令...', 114)]], 1284)}</div>`],
  [1514, 18, Ic('dish', 18)], [1543, 19, Ic('star', 19)], [1573, 20, Ic('user')], [1600.5, 30, T('登入')], [1705, 8, '<inv-caret></inv-caret>'], [1725, 20, Ic('exch')],
  [1757, 1, '<div class="sep" style="height:22px"></div>'], [1768, 22, Ic('help')], [1799, 8, '<inv-caret></inv-caret>'], [1840, 12, Ic('min')], [1868, 16, Ic('rest')], [1900, 14, Ic('cls')]
]));
define('inv-tabs', `:host{height:29px;background:#515151;color:#d2d2d2;display:flex;align-items:flex-end}
.r{display:flex;align-items:center;height:25px;width:100%;padding-bottom:2px}.tab{height:25px;line-height:23px;margin-bottom:-2px;display:flex;justify-content:center}`, () => `<div class="r">${cells([
  [0, 54, `<div class="tab" style="background:#f79a4b;color:#fff;padding-right:2px">${T('檔案')}</div>`],
  [57, 76, `<div class="tab" style="background:#f6f6f6;color:#515151">${T('3D 模型', 54)}</div>`],
  ...[[146, '草圖'], [200, '檢驗'], [254, '工具'], [308, '管理'], [362, '檢視'], [416, '環境'], [470, 'BIM', 28], [522, '開始'], [576, 'Vault', 37], [636, 'Autodesk A360', 107]].map(([x, t, w]) => [x, w || 30, T(t, w)]),
  [784, 16, Ic('ribmin')], [808, 7, '<inv-caret w="7"></inv-caret>']])}</div>`);
define('ribbon-panel', `:host{flex:none;height:119px;display:flex;flex-direction:column;border-right:1px solid #d5d7da}
.body{height:96px;padding-top:1px;display:flex;align-items:flex-start}.lab{height:21px;display:flex;justify-content:center;align-items:center;padding-right:1px;color:#3c3c3c;gap:9px}`,
  e => `<div class="body"><slot></slot></div><div class="lab">${T(e.getAttribute('label'))}${e.hasAttribute('more') ? '<inv-caret w="10"></inv-caret>' : ''}</div>`);
define('ribbon-big', `:host{flex:none;display:flex;flex-direction:column;align-items:center;padding-top:5px}
.i{height:44px}.t{line-height:19px;padding-right:1px}.d1{padding-top:1.500px}.c{padding-top:5px}.two{display:flex;align-items:center}.two inv-caret{margin:-8px -12px 0 6px}`, e => {
  const [a, b] = e.getAttribute('label').split('|');
  return `<div class="i">${Ic(e.getAttribute('icon'), e.getAttribute('w') || 38)}</div><div class="t${b ? ' d1' : ''}">${T(a)}</div>` +
    (b ? `<div class="t two">${T(b, b.startsWith('2D') ? 54 : 0)}${e.hasAttribute('drop') ? '<inv-caret w="6"></inv-caret>' : ''}</div>` : '') + (!b && e.hasAttribute('drop') ? '<div class="c"><inv-caret w="6"></inv-caret></div>' : '');
});
define('ribbon-item', ':host{height:31px;display:flex;align-items:center}.t{padding-left:7px}inv-caret{margin-left:12px}', e =>
  `${Ic(e.getAttribute('icon'))}<div class="t">${T(e.getAttribute('label'), +e.getAttribute('tw') || 0)}</div>${e.hasAttribute('drop') ? '<inv-caret w="6"></inv-caret>' : ''}`);
const big = (icon, label, w = 38, extra = '') => `<ribbon-big icon="${icon}" label="${label}" w="${w}" ${extra}></ribbon-big>`;
const col = l => `<div style="padding-top:1px">${l.map(([i, t, w, d]) => `<ribbon-item icon="${i}" label="${t}" ${w ? `tw="${w}"` : ''} ${d ? 'drop' : ''}></ribbon-item>`).join('')}</div>`;
const panel = (x, r, label, list, more = '') => `<ribbon-panel label="${label}" ${more} style="width:${r - x}px">${cells(list, x)}</ribbon-panel>`;
define('inv-ribbon', ':host{height:119px;background:#f6f6f6;display:flex}.dd{width:43px;height:27px;margin:4px 0 0 3px;border:1px solid #c6c8ca;background:#fafafa;display:flex;align-items:center;padding-left:3px;gap:8px}', () =>
  panel(0, 93, '草圖', [[8, 76, big('sketch', '開始繪製|2D 草圖', 38, 'drop')]]) +
  panel(93, 433, '建立', [[98, 42, big('extrude', '擠出', 40)], [146, 42, big('revolve', '迴轉', 40)], [196, 95, col([['sweep', '掃掠'], ['loft', '斷面混成'], ['coil', '螺旋']])], [295, 65, col([['emboss', '浮雕'], ['derive', '導出'], ['rib', '肋']])], [365, 65, col([['decal', '印花'], ['import', '匯入']])]]) +
  panel(433, 800, '修改', [[440, 38, big('hole', '孔')], [488, 38, big('fillet', '圓角')], [536, 60, col([['chamfer', '倒角'], ['shell', '薄殼'], ['draft', '拔模']])], [604, 100, col([['thread', '螺紋'], ['combine', '合併'], ['thicken', '增厚/ 偏移', 69]])], [713, 80, col([['split', '分割'], ['direct', '直接'], ['delface', '刪除 面', 48]])]], 'more') +
  panel(800, 858, '探索', [[805, 47, big('shapegen', '造型|產生器', 38)]]) +
  panel(858, 1006, '工作特徵', [[869, 40, big('plane', '平面', 38, 'drop')], [923, 80, col([['axis', '軸線', 0, 1], ['point', '點', 0, 1], ['ucs', 'UCS', 29]])]]) +
  panel(1006, 1194, '陣列', [[1013, 105, col([['rect', '矩形'], ['circ', '環形'], ['skdrv', '草圖驅動式']])], [1126, 65, col([['mirror', '鏡射']])]]) +
  panel(1194, 1327, '建立自由形式', [[1205, 40, big('freeform', '方塊', 39, 'drop')], [1259, 60, col([['ffface', '面'], ['ffconv', '轉換']])]]) +
  panel(1327, 1597, '曲面', [[1334, 60, col([['stitch', '縫合'], ['patch', '修補'], ['sculpt', '雕塑']])], [1402, 78, col([['ruled', '直紋面'], ['trim', '修剪'], ['extend', '延伸']])], [1485, 105, col([['replace', '取代面'], ['repair', '修復本體'], ['fitmesh', '擬合網面面']])]]) +
  panel(1597, 1651, '模擬', [[1603, 40, big('stress', '應力|分析', 39)]]) +
  panel(1651, 1709, '轉換', [[1655, 48, big('sheet', '轉換為|板金', 38)]]) +
  `<div class="dd">${Ic('dd')}<inv-caret w="6"></inv-caret></div>`);
define('tree-row', ':host{display:flex;height:20px;align-items:center;color:#000;font-size:15px}', e => {
  const root = e.hasAttribute('root'), t = e.textContent, [, a, b] = t.match(/^([^\d(.:]*)(.*)$/);
  const w = [...a].length * 15 + (b === '' ? 0 : b === '.ipt' ? 19 : b === '(1)' ? 17 : b.startsWith(':') ? 39 : 8);
  const ic = root ? [[14, 16, Ic(e.getAttribute('icon'))], [32, w, `<fit-text w="${w}">${t}</fit-text>`, 'margin-top:-1px']]
    : [...(e.hasAttribute('leaf') ? [] : [[10, 6, Ic('exp'), 'margin-top:3px']]), [23, 16, Ic(e.getAttribute('icon'))], [41, w, `<fit-text w="${w}">${t}</fit-text>`, 'margin-top:-1px']];
  return cells(ic, 2);
});
define('inv-browser', `:host{width:243px;height:825px;background:#f6f6f6;border-top:1px solid #9c9c9c;display:flex;flex-direction:column}
.a{height:70px;display:flex;flex-direction:column}.r{display:flex;align-items:center}.tree{margin:0 3px 0 2px;height:750px;background:#fff;border-top:1px solid #d9d9d9}.rim{background:#f0f0f0}.f{height:4px;border-bottom:2px solid #a8a8a8;background:#f0f0f0}`, () =>
  `<div class="a"><div class="r" style="height:15px;padding-top:1px">${cells([[229, 10, Ic('px')]])}</div><div class="r" style="height:24px;color:#5a5a5a">${cells([[9.5, 30, T('模型', 29), 'padding-top:5px'], [44, 8, '<inv-caret></inv-caret>', 'padding-top:4px'], [220, 16, Ic('qm'), 'margin-top:-4px']])}</div><div class="r" style="height:31px;padding-top:2px">${cells([[6, 14, Ic('filter')], [29, 16, Ic('bino')]])}</div></div>
<div class="rim"><div class="tree">
<tree-row icon="part" root>球形間歇輪.ipt</tree-row><tree-row icon="bodies">實體本體(1)</tree-row><tree-row icon="views">視圖: 主要</tree-row><tree-row icon="folder">原點</tree-row>
${[['trev', '迴轉1'], ['text', '擠出1'], ['tcirc', '環形陣列1'], ['tplane', '工作平面1'], ['text', '擠出2'], ['tcirc', '環形陣列2'], ['tplane', '工作平面2'], ['text', '擠出3'], ['tdirect', '直接編輯1', 1], ['text', '擠出4'], ['tfillet', '圓角1', 1], ['tfillet', '圓角2', 1], ['tfillet', '圓角3', 1], ['text', '擠出5'], ['text', '擠出6'], ['trev', '迴轉2'], ['text', '擠出7'], ['text', '擠出8'], ['tend', '零件終止', 1]].map(([i, t, l]) => `<tree-row icon="${i}"${l ? ' leaf' : ''}>${t}</tree-row>`).join('')}
</div></div><div class="f"></div>`);
define('part-model', 'svg{display:block}', () => `<svg width="480" height="400" viewBox="0 0 1440 1200"><defs>
<linearGradient id="b" x1=".35" x2=".55" y2="1"><stop offset="0" stop-color="#cbcac8"/><stop offset=".5" stop-color="#b3b3b1"/><stop offset=".82" stop-color="#a6a6a4"/><stop offset="1" stop-color="#8c8c8a"/></linearGradient>
<linearGradient id="s"><stop offset="0" stop-color="#969694"/><stop offset=".25" stop-color="#acacaa"/><stop offset=".5" stop-color="#b0b0ae"/><stop offset=".8" stop-color="#a9a9a7"/><stop offset="1" stop-color="#8e8e8c"/></linearGradient>
<linearGradient id="d" x2="0" y2="1"><stop offset="0" stop-color="#b4b4b2"/><stop offset=".6" stop-color="#a8a8a6"/><stop offset="1" stop-color="#959593"/></linearGradient>
<linearGradient id="e"><stop offset="0" stop-color="#777" stop-opacity=".28"/><stop offset=".15" stop-color="#777" stop-opacity=".1"/><stop offset=".4" stop-color="#777" stop-opacity="0"/><stop offset=".6" stop-color="#777" stop-opacity="0"/><stop offset=".85" stop-color="#777" stop-opacity=".14"/><stop offset="1" stop-color="#777" stop-opacity=".36"/></linearGradient>
<linearGradient id="w" x2="0" y2="1"><stop offset="0" stop-color="#b0b0ae"/><stop offset=".5" stop-color="#9b9b99"/><stop offset="1" stop-color="#838381"/></linearGradient></defs>
<path d="M252 72H483A243 245 0 0 0 969 72H1199V326A538 538 0 0 1 861 592H591A538 538 0 0 1 252 326z" fill="url(#b)"/>
<path d="M252 72H483A243 245 0 0 0 969 72H1199V326A538 538 0 0 1 861 592H591A538 538 0 0 1 252 326z" fill="url(#e)"/>
<path d="M483 74A243 244 0 0 0 969 74" fill="none" stroke="#dadad8" stroke-width="5"/><path d="M252 74H345M390 74H483M969 74H1061M1107 74H1199" stroke="#d6d6d4" stroke-width="4"/>
<g id="wl"><path d="M312 75H345C345 270 430 440 519 485V500Q505 512 485 505C390 450 312 260 312 75z" fill="url(#w)"/><path d="M312 75C312 270 395 490 490 508Q515 510 519 498" fill="none" stroke="#b9b9b7" stroke-width="4"/><path d="M345 71H390C390 210 430 345 519 485C430 440 345 270 345 71z" fill="#000"/></g>
<use href="#wl" transform="matrix(-1 0 0 1 1452 0)"/>
<path d="M591 592H861V663H591z" fill="url(#s)"/><path d="M591 594H861" stroke="#8b8b89" stroke-width="4"/><path d="M594 661H858" stroke="#858583" stroke-width="4"/>
<path d="M645 664H807V852H645z" fill="url(#s)"/><path d="M645 1067H807V1148H645z" fill="url(#s)"/><path d="M645 1067H807V1148H645z" fill="#777" opacity=".22"/>
<path d="M84 852H1371C1285 980 1165 1067 1010 1067H440C290 1067 170 980 84 852z" fill="url(#d)"/><path d="M84 852H1371C1285 980 1165 1067 1010 1067H440C290 1067 170 980 84 852z" fill="url(#e)"/></svg>`);
define('axis-triad', 'svg{display:block}', () => `<svg width="80" height="80" viewBox="0 0 80 80"><defs><linearGradient id="y"><stop offset="0" stop-color="#0a8a0a"/><stop offset=".45" stop-color="#15b215"/><stop offset="1" stop-color="#064e06"/></linearGradient><linearGradient id="x" x2="0" y2="1"><stop offset="0" stop-color="#c80000"/><stop offset="1" stop-color="#5e0000"/></linearGradient></defs>
<path d="M16.500 38V58" stroke="#00b800"/><path d="M16.500 22L25 37H8z" fill="url(#y)"/><path d="M25 66.500H47" stroke="#c00000"/><path d="M46 58V75.500L61.500 67z" fill="url(#x)"/><circle cx="16.500" cy="67" r="8.600" fill="#00009c"/>
<text x="16.500" y="73" text-anchor="middle" font-family="Noto Sans" font-size="16" fill="#0000f8">Z</text><text x="16.500" y="19.500" text-anchor="middle" font-family="Noto Sans" font-size="19" fill="#00d400">Y</text><text x="70.500" y="74" text-anchor="middle" font-family="Noto Sans" font-size="19" fill="#e00000">X</text></svg>`);
define('view-cube', ':host{width:54px;height:54px;background:linear-gradient(#6d6d6d,#5d5d5d);border:1px solid #777;display:flex;align-items:center;justify-content:center}.f{width:34px;height:34px;background:#5d5f63;color:#484a52;font:34px/29px "Noto Sans CJK TC",sans-serif;text-align:center}', () => '<div class="f">前</div>');
define('nav-bar', 'svg{display:block}', () => `<svg width="33" height="196" viewBox="0 0 33 196"><rect x=".7" y=".7" width="31" height="194.500" rx="4" fill="#4a4a4a" stroke="#777" stroke-width="1.200"/>
<circle cx="25" cy="6" r="4" fill="#333"/><path d="M23 4l4 4m0-4l-4 4" stroke="#bbb"/><path d="M6 32a10 10 0 0 1 10-10h10v10a10 10 0 1 1-20 0z" fill="#a3a3a3"/><circle cx="16" cy="32" r="6.300" fill="#adadad" stroke="#4e4e4e" stroke-width="1.300"/><path d="M8 39l3.500-3M24 39l-3.500-3" stroke="#4e4e4e"/><path d="M13 53h6l-3 3z" fill="#3c3c3c"/><path d="M3 60.500h26" stroke="#2f2f2f"/>
<g stroke="#d8d8d8" stroke-linecap="round" fill="none"><path d="M12.500 76L11 70M15.500 75L15 68.500M18.500 75L19 69M20.500 76.500L22.500 71.500" stroke-width="1.700"/><path d="M13 79L9 75.500" stroke-width="2"/></g><path d="M12 75h9.500l-.5 5-1.500 3h-5L12 79z" fill="#d8d8d8"/>
<circle cx="14" cy="97.500" r="4.300" fill="#b4c2ba"/><path d="M17 101l3 3.500" stroke="#888" stroke-width="1.500"/><path d="M22 91.500v5M19.500 94h5M20 98h5" stroke="#383838" stroke-width="1"/><path d="M13 115h6l-3 3zM13 149h6l-3 3z" fill="#3c3c3c"/>
<path d="M16.500 126v14M14.500 128.500l2-3 2 3" fill="none" stroke="#ccc"/><path d="M14 132q-6-1-6 1 0 2 4 3m7-4q6-1 6 1 0 3-5 3" fill="none" stroke="#a0a0a0" stroke-dasharray="2 1"/><path d="M10 137l4-3v2h3v2h-3v2z" fill="#2c2c2c"/>
<rect x="9.500" y="166" width="13" height="8" fill="none" stroke="#b8b8b8" stroke-width="2"/><path d="M12 170h8" stroke="#aaa" stroke-width="3"/><path d="M10 163l3-1.500 2 1 4-1.500 1 1.500" stroke="#aaa" stroke-width="1.600" fill="none"/><circle cx="25" cy="189" r="4.500" fill="#333"/><path d="M22.500 187.500h5" stroke="#ccc"/><path d="M22.500 189.500h5l-2.500 3z" fill="#ccc"/></svg>`);
define('inv-viewport', `:host{position:relative;height:795px;background:#000;overflow:hidden}
.o{position:absolute}`, () => `<part-model class="o" style="left:597px;top:194px"></part-model><axis-triad class="o" style="left:62px;top:649px"></axis-triad><view-cube class="o" style="left:1589px;top:59px;display:flex"></view-cube><nav-bar class="o" style="left:1644px;top:146px"></nav-bar><div class="o" style="left:1625px;top:6px">${Ic('wbtn')}</div>`);
define('inv-doctabs', `:host{height:30px;background:#606060;color:#d6d6d6;display:flex;align-items:center}.s{height:30px;background:#a0a0a0}.act{height:30px;background:#f6f6f6;color:#505050;display:flex;align-items:center}`, () => cells([
  [248, 20, Ic('casc')], [278, 20, Ic('grid4')], [308, 20, Ic('hsplit')], [338, 20, Ic('vsplit')], [371, 14, Ic('up')], [393, 1, '<div class="s"></div>'],
  [404, 60, T('我的首頁', 59)], [489, 68, T('組合1.iam', 68)], [571, 142, `<div class="act">${cells([[581.5, 97, T('球形間歇輪.ipt', 97)], [687, 12, Ic('tx')]], 571)}</div>`], [723, 68, T('驅動件.ipt', 68)], [815, 52, T('底座.ipt', 52)], [891, 68, T('裝配體.ipt', 68)]], 243));
define('inv-status', `:host{height:31px;background:#f6f6f6;color:#000;display:flex;flex-direction:column}.r{height:29px;display:flex;align-items:center}.v{height:29px;background:#dcdcdc}.b{height:2px;display:flex}.b div:nth-child(odd){background:#1d2a33}.b div:nth-child(2){border-top:1px solid #b5b5b5}`, () =>
  `<div class="r">${cells([[.5, 109, T('要求說明，按 F1', 109)], [1842, 1, '<div class="v"></div>'], [1853, 10, '1'], [1882, 1, '<div class="v"></div>'], [1891, 10, '5']])}</div><div class="b"><div style="width:60px"></div><div style="width:430px"></div><div style="width:1430px"></div></div>`);
define('inv-app', ':host{width:1920px;height:1032px;overflow:hidden}.m{display:flex}.v{flex:1;min-width:0}', () =>
  '<inv-titlebar></inv-titlebar><inv-tabs></inv-tabs><inv-ribbon></inv-ribbon><div class="m"><inv-browser></inv-browser><div class="v"><inv-viewport></inv-viewport><inv-doctabs></inv-doctabs></div></div><inv-status></inv-status>');
</script>
</body>
</html>
